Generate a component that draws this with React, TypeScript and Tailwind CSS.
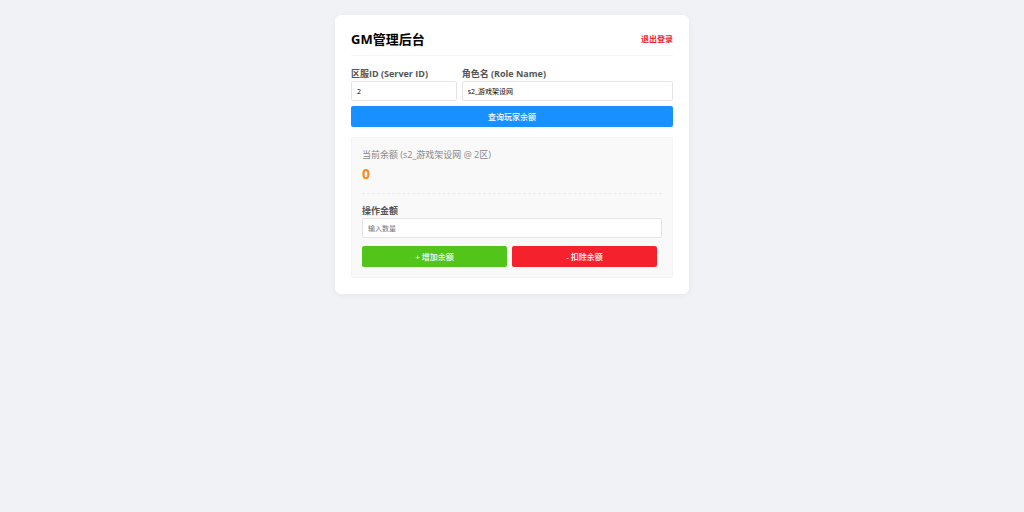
import React, { useState } from 'react';

const labelClass = 'block text-[9px] leading-[15px] font-bold text-[#555]';
const inputClass =
    'block w-full h-5 rounded-xs border border-[#e4e4e4] bg-white px-[5px] text-[7px] text-black placeholder:text-[#757575] outline-none focus:border-[#1890ff]';
const buttonClass = 'h-[21px] rounded-xs text-[8px] leading-[21px] font-medium text-white';

export default function App() {
    const [serverId, setServerId] = useState('2');
    const [roleName, setRoleName] = useState('s2_游戏架设网');
    const [amount, setAmount] = useState('');

    return (
        <div className={`min-h-screen bg-[#f0f2f5] px-4 pt-[15px] font-['Open_Sans','Noto_Sans_CJK_SC',sans-serif]`}>
            <main className="mx-auto max-w-[354px] rounded-md bg-white p-4 shadow-[0_1px_6px_rgba(0,0,0,0.06)]">
                <header className="flex items-center justify-between border-b border-[#f6f6f6] pb-2">
                    <h1 className="text-[13px] leading-4 font-bold text-black">GM管理后台</h1>
                    <a href="#logout" className="text-[8px] leading-3 font-bold text-[#f5222d]">退出登录</a>
                </header>

                <form className="mt-[10px]" onSubmit={(e) => e.preventDefault()}>
                    <div className="flex gap-[5px]">
                        <div className="flex-1">
                            <label htmlFor="server-id" className={labelClass}>区服ID (Server ID)</label>
                            <input
                                id="server-id"
                                className={inputClass}
                                value={serverId}
                                onChange={(e) => setServerId(e.target.value)}
                            />
                        </div>
                        <div className="flex-2">
                            <label htmlFor="role-name" className={labelClass}>角色名 (Role Name)</label>
                            <input
                                id="role-name"
                                className={inputClass}
                                value={roleName}
                                onChange={(e) => setRoleName(e.target.value)}
                            />
                        </div>
                    </div>
                    <button type="submit" className={`${buttonClass} mt-[5px] w-full bg-[#1890ff]`}>查询玩家余额</button>
                </form>

                <section className="mt-[10px] rounded-xs border border-[#f3f3f3] bg-[#f9f9f9] p-[10px]">
                    <p className="text-[9px] leading-[14px] text-[#888]">当前余额 (s2_游戏架设网 @ 2区)</p>
                    <p className="mt-[2px] text-[14px] leading-5 font-bold text-[#fa8c16]">0</p>
                    <hr className="my-[9px] border-t border-dashed border-[#eaeaea]" />
                    <label htmlFor="amount" className={labelClass}>操作金额</label>
                    <input
                        id="amount"
                        className={inputClass}
                        placeholder="输入数量"
                        value={amount}
                        onChange={(e) => setAmount(e.target.value)}
                    />
                    <div className="mt-2 mr-[5px] flex gap-[5px]">
                        <button type="button" className={`${buttonClass} flex-1 bg-[#52c41a]`}>+ 增加余额</button>
                        <button type="button" className={`${buttonClass} flex-1 bg-[#f5222d]`}>- 扣除余额</button>
                    </div>
                </section>
            </main>
        </div>
    );
}
